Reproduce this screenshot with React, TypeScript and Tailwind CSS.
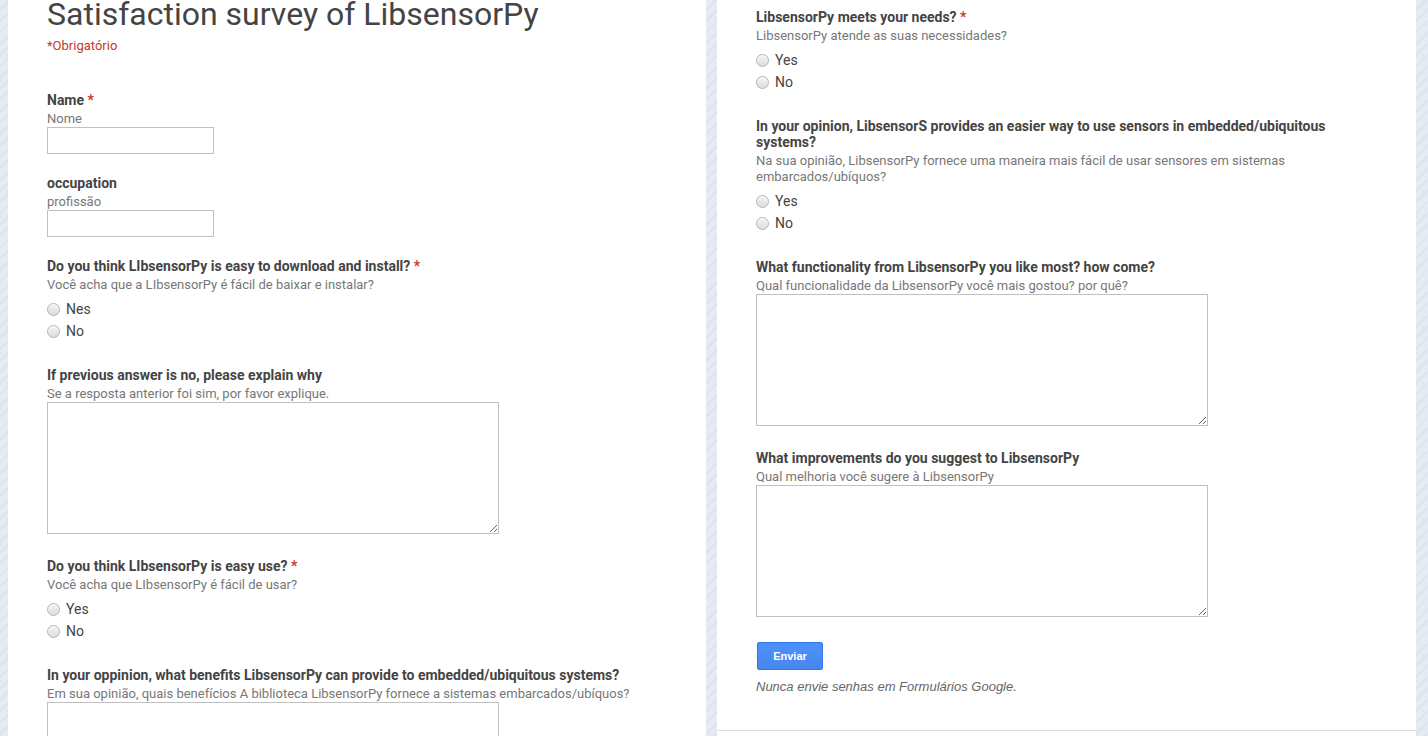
import React from 'react';

const font = { fontFamily: 'Roboto, "Noto Sans", sans-serif' };

const Required = () => <span className="text-[#c43b1d]"> *</span>;

interface QuestionProps {
  title: string;
  help: string;
  required?: boolean;
  children: React.ReactNode;
}

const Question: React.FC<QuestionProps> = ({ title, help, required, children }) => (
  <div className="mb-[21px]">
    <div className="text-[14px] leading-[16px] font-bold text-[#444]">
      {title}
      {required && <Required />}
    </div>
    <div className="mt-[3px] text-[13px] leading-[16px] text-[#777]">{help}</div>
    {children}
  </div>
);

const TextInput = () => (
  <input
    type="text"
    className="block w-[167px] h-[27px] border border-[#c0c0c0] bg-white outline-none"
  />
);

const TextArea = () => (
  <div className="pb-[3px]">
    <textarea className="block w-[452px] h-[132px] border border-[#c0c0c0] bg-white outline-none" />
  </div>
);

const Radio = ({ label }: { label: string }) => (
  <div className="flex items-center h-[22px]">
    <span className="w-[13px] h-[13px] rounded-full border border-[#b4b4b4] bg-gradient-to-b from-[#f4f4f4] to-[#dcdcdc] shadow-[inset_0_1px_1px_rgba(255,255,255,0.8)]" />
    <span className="ml-[6px] text-[14px] text-[#444]">{label}</span>
  </div>
);

const Radios = ({ options }: { options: string[] }) => (
  <div className="mt-[5px] pb-[4px]">
    {options.map((o) => (
      <Radio key={o} label={o} />
    ))}
  </div>
);

const Strip = ({ className }: { className: string }) => (
  <div
    className={`${className} shrink-0 h-full bg-[#e3e7ef] bg-[repeating-linear-gradient(135deg,#e6eaf2_0px,#e6eaf2_6px,#dfe3ec_6px,#dfe3ec_8px)]`}
  />
);

export default function App() {
  return (
    <div className="flex w-[1428px] h-[736px] overflow-hidden bg-white" style={font}>
      <Strip className="w-[8px]" />

      {/* Left page */}
      <div className="w-[698px] shrink-0 h-full bg-white pl-[39px] overflow-hidden">
        <h1 className="mt-[-2px] text-[32px] leading-[32px] font-normal text-[#444]">
          Satisfaction survey of LibsensorPy
        </h1>
        <div className="mt-[8px] text-[13px] leading-[16px] text-[#c43b1d]">*Obrigatório</div>

        <div className="mt-[38px]">
          <Question title="Name" help="Nome" required>
            <TextInput />
          </Question>
          <Question title="occupation" help="profissão">
            <TextInput />
          </Question>
          <Question
            title="Do you think LIbsensorPy is easy to download and install?"
            help="Você acha que a LIbsensorPy é fácil de baixar e instalar?"
            required
          >
            <Radios options={['Nes', 'No']} />
          </Question>
          <Question
            title="If previous answer is no, please explain why"
            help="Se a resposta anterior foi sim, por favor explique."
          >
            <TextArea />
          </Question>
          <Question
            title="Do you think LIbsensorPy is easy use?"
            help="Você acha que LIbsensorPy é fácil de usar?"
            required
          >
            <Radios options={['Yes', 'No']} />
          </Question>
          <Question
            title="In your oppinion, what benefits LibsensorPy can provide to embedded/ubiquitous systems?"
            help="Em sua opinião, quais benefícios A biblioteca LibsensorPy fornece a sistemas embarcados/ubíquos?"
          >
            <TextArea />
          </Question>
        </div>
      </div>

      <Strip className="w-[11px]" />

      {/* Right page */}
      <div className="flex-1 h-full flex flex-col bg-white">
        <div className="h-[731px] pl-[39px] pt-[9px] border-b border-[#dcdcdc] overflow-hidden">
          <div className="w-[600px]">
            <Question
              title="LibsensorPy meets your needs?"
              help="LibsensorPy atende as suas necessidades?"
              required
            >
              <Radios options={['Yes', 'No']} />
            </Question>
            <Question
              title="In your opinion, LibsensorS provides an easier way to use sensors in embedded/ubiquitous systems?"
              help="Na sua opinião, LibsensorPy fornece uma maneira mais fácil de usar sensores em sistemas embarcados/ubíquos?"
            >
              <Radios options={['Yes', 'No']} />
            </Question>
            <Question
              title="What functionality from LibsensorPy you like most? how come?"
              help="Qual funcionalidade da LibsensorPy você mais gostou? por quê?"
            >
              <TextArea />
            </Question>
            <Question
              title="What improvements do you suggest to LibsensorPy"
              help="Qual melhoria você sugere à LibsensorPy"
            >
              <TextArea />
            </Question>
          </div>

          <button
            type="button"
            className="mt-[1px] ml-[1px] w-[66px] h-[28px] rounded-[2px] border border-[#3079ed] bg-gradient-to-b from-[#4d90fe] to-[#4787ed] text-white text-[11px] font-bold"
            style={{ fontFamily: '"Liberation Sans", Arial, sans-serif' }}
          >
            Enviar
          </button>
          <p
            className="mt-[9px] text-[13px] leading-[16px] italic text-[#666]"
            style={{ fontFamily: '"Liberation Sans", Arial, sans-serif' }}
          >
            Nunca envie senhas em Formulários Google.
          </p>
        </div>
      </div>

      <Strip className="w-[12px]" />
    </div>
  );
}
